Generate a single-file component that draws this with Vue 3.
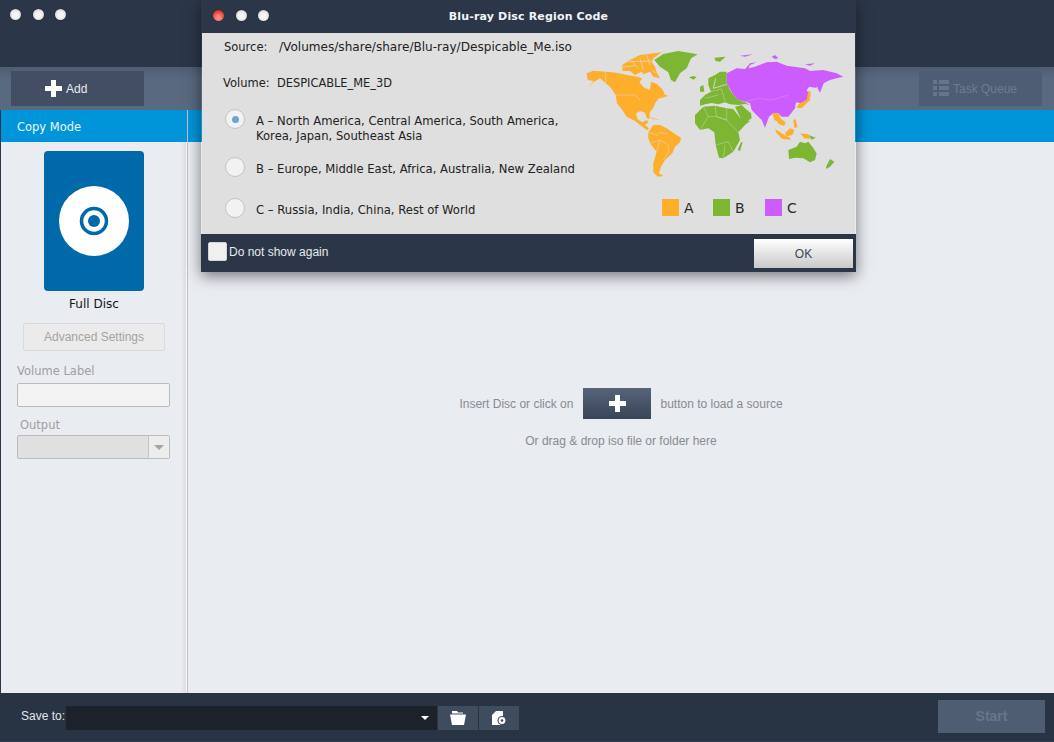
<template>
  <div class="window">
    <header class="titlebar">
      <div class="lights">
        <span class="light"></span>
        <span class="light"></span>
        <span class="light"></span>
      </div>
    </header>

    <div class="toolbar">
      <button class="tool-btn add-btn">
        <svg width="17" height="17" viewBox="0 0 17 17"><path d="M6 0h5v6h6v5h-6v6H6v-6H0V6h6z" fill="#fff" /></svg>
        <span>Add</span>
      </button>
      <button class="tool-btn queue-btn">
        <svg width="16" height="17" viewBox="0 0 16 17" fill="#66758a">
          <rect x="0" y="0" width="4" height="4" /><rect x="6" y="0" width="10" height="4" />
          <rect x="0" y="6" width="4" height="4" /><rect x="6" y="6" width="10" height="4" />
          <rect x="0" y="12" width="4" height="4" /><rect x="6" y="12" width="10" height="4" />
        </svg>
        <span>Task Queue</span>
      </button>
    </div>

    <div class="content">
      <aside class="sidebar">
        <div class="mode-title">Copy Mode</div>
        <div class="side-body">
          <div class="disc-card">
            <svg width="70" height="70" viewBox="0 0 70 70">
              <circle cx="35" cy="35" r="35" fill="#fff" />
              <circle cx="35" cy="35" r="12.5" fill="none" stroke="#0069aa" stroke-width="3.5" />
              <circle cx="35" cy="35" r="6" fill="#0069aa" />
            </svg>
          </div>
          <div class="disc-name">Full Disc</div>
          <button class="advanced">Advanced Settings</button>
          <label class="field-label">Volume Label</label>
          <div class="text-input"></div>
          <label class="field-label output-label">Output</label>
          <div class="select-box">
            <span class="select-arrow"></span>
          </div>
        </div>
      </aside>

      <main class="main">
        <div class="mode-strip"></div>
        <div class="drop-area">
          <div class="hint-row">
            <span>Insert Disc or click on</span>
            <div class="hint-btn">
              <svg width="17" height="17" viewBox="0 0 17 17"><path d="M6 0h5v6h6v5h-6v6H6v-6H0V6h6z" fill="#fff" /></svg>
            </div>
            <span>button to load a source</span>
          </div>
          <div class="hint-second">Or drag &amp; drop iso file or folder here</div>
        </div>
      </main>
    </div>

    <footer class="bottom">
      <span class="save-label">Save to:</span>
      <div class="save-input"><span class="save-arrow"></span></div>
      <button class="icon-btn">
        <svg width="16" height="14" viewBox="0 0 16 14" fill="#fff">
          <path d="M2 0h5l1 1.500h5v1H2z" />
          <path d="M0 3.500h16l-2 10.500H2z" />
        </svg>
      </button>
      <button class="icon-btn">
        <svg width="15" height="14" viewBox="0 0 15 14">
          <path d="M4 0h7v14H0V4z" fill="#fff" />
          <circle cx="10" cy="9.500" r="4.500" fill="#3f4c5e" />
          <circle cx="10" cy="9.500" r="3.400" fill="#fff" />
          <circle cx="10" cy="9.500" r="1.300" fill="#3f4c5e" />
        </svg>
      </button>
      <button class="start-btn">Start</button>
    </footer>

    <section class="dialog">
      <div class="dialog-title">
        <div class="lights dialog-lights">
          <span class="light red"></span>
          <span class="light"></span>
          <span class="light"></span>
        </div>
        <span class="dialog-heading">Blu-ray Disc Region Code</span>
      </div>

      <div class="dialog-body">
        <div class="dialog-left">
          <div class="info-row source-row"><span class="info-key">Source:</span>/Volumes/share/share/Blu-ray/Despicable_Me.iso</div>
          <div class="info-row volume-row"><span class="info-key short">Volume:</span>DESPICABLE_ME_3D</div>
          <div
            v-for="region in regions"
            :key="region.code"
            class="region"
            :class="'region-' + region.code"
          >
            <span class="radio" :class="{ checked: region.code === 'a' }"></span>
            <span class="region-text">{{ region.text }}</span>
          </div>
        </div>

        <div class="dialog-right">
          <svg class="world" width="270" height="140" viewBox="0 0 810 420">
            <g fill="#fdae2a">
              <path d="M5,85 L25,77 L62,80 L95,83 L125,90 L150,94 L172,100 L163,112 L178,128 L195,135 L198,110 L215,116 L232,133 L240,150 L250,152 L232,158 L222,160 L212,172 L205,188 L195,200 L193,222 L186,220 L180,203 L165,198 L153,205 L157,222 L172,232 L185,225 L190,232 L180,240 L192,250 L186,256 L172,245 L150,228 L125,215 L108,190 L96,175 L92,150 L75,125 L62,115 L45,100 L25,112 L10,128 L25,108 L8,105 Z" />
              <path d="M112,60 L135,45 L165,30 L230,22 L205,40 L200,52 L210,65 L215,82 L225,100 L205,95 L195,80 L175,88 L170,80 L150,90 L135,78 L112,78 Z" />
              <path d="M190,262 L205,240 L225,240 L245,250 L262,262 L288,278 L285,292 L270,305 L262,325 L240,345 L228,365 L222,385 L235,393 L218,395 L205,382 L205,355 L215,320 L195,295 L190,280 Z" />
              <path d="M190,215 L215,222 L225,225 L205,222 Z" />
            </g>
            <g fill="none" stroke="#dfdfdf">
              <path stroke-width="1.500" d="M62,80 L62,115" />
              <path stroke-width="1.500" d="M92,150 L150,150 L165,165" />
              <path stroke-width="2" d="M112,66 L150,62 M140,45 L160,72 M165,40 L175,75 M185,30 L195,60 M130,50 L200,48 M200,75 L215,85" />
              <path stroke-width="1.500" d="M190,262 L215,270 L225,262 L250,268 M195,295 L225,285 L250,300 L250,322 L235,345 M225,285 L215,320" />
            </g>
            <g fill="#7cb632">
              <path d="M208,45 L235,27 L280,18 L338,28 L318,40 L305,70 L285,85 L270,112 L258,105 L250,82 L225,65 Z" />
              <path d="M312,97 L325,93 L335,97 L325,104 Z" />
            </g>
            <g transform="translate(330 0)">
              <g fill="#cd5cff">
                <path d="M95,85 L125,70 L150,72 L180,65 L215,52 L245,50 L275,62 L330,70 L345,78 L385,75 L425,85 L445,95 L425,100 L405,105 L385,115 L375,125 L360,128 L343,125 L335,135 L345,150 L335,165 L318,175 L303,172 L300,190 L280,215 L260,215 L250,205 L235,205 L222,215 L210,248 L200,225 L190,215 L170,195 L165,175 L150,170 L130,165 L115,150 L95,115 Z" />
                <path d="M370,115 L388,110 L375,143 L368,130 Z" />
                <path d="M148,75 L165,55 L185,52 L165,60 L158,75 Z" />
                <path d="M230,35 L240,30 L250,40 L240,42 Z" />
                <path d="M135,32 L175,28 L150,35 Z" />
                <path d="M330,58 L360,55 L345,62 Z" />
              </g>
              <g fill="#7cb632">
                <path d="M40,100 L60,90 L75,80 L95,80 L95,115 L105,135 L115,150 L130,165 L150,172 L165,180 L150,177 L130,180 L105,178 L90,172 L70,178 L50,174 L30,178 L15,182 L15,165 L30,150 L48,140 L40,120 Z" />
                <path d="M15,125 L25,120 L28,140 L15,140 Z" />
                <path d="M0,210 L25,185 L60,182 L95,190 L115,192 L135,218 L165,228 L150,240 L130,262 L135,285 L115,320 L85,340 L72,338 L62,300 L58,262 L40,250 L15,255 L0,235 Z" />
                <path d="M120,185 L140,180 L150,190 L168,205 L170,220 L145,235 L132,210 Z" />
                <path d="M138,292 L143,292 L135,318 L128,315 Z" />
                <path d="M58,38 L92,35 L75,50 L62,48 Z" />
                <path d="M280,315 L305,305 L315,290 L330,295 L340,290 L352,305 L365,325 L360,345 L345,352 L325,340 L300,338 L282,342 Z" />
                <path d="M405,342 L418,350 L405,365 L395,372 L393,365 Z" />
                <path d="M340,270 L362,278 L350,284 Z" />
              </g>
              <g fill="#fdae2a">
                <path d="M232,205 L250,205 L258,222 L272,232 L268,242 L252,238 L245,228 L238,225 Z" />
                <path d="M340,138 L347,140 L345,165 L320,190 L305,188 L310,178 L335,165 Z" />
                <path d="M240,252 L265,268 L285,278 L288,284 L262,282 L245,265 Z" />
                <path d="M270,265 L285,250 L298,255 L292,270 L275,274 Z" />
                <path d="M295,225 L301,222 L308,245 L298,250 Z" />
                <path d="M315,265 L340,268 L345,282 L328,280 Z" />
              </g>
              <g fill="none" stroke="#dfdfdf" stroke-width="1.200">
                <path d="M25,185 L40,215 L15,255 M60,182 L65,215 L95,225 L130,262 M95,190 L95,225 L65,215 L40,215 M62,300 L100,290 L115,320 M85,340 L90,300" />
                <path stroke-width="2.500" d="M62,100 L55,130 L95,118" />
                <path d="M48,140 L80,132 L90,170 M30,160 L70,150" />
                <path d="M150,170 L190,160 L230,165 L280,150" stroke="#e2a0ff" />
              </g>
            </g>
          </svg>
          <div class="legend">
            <div v-for="item in legend" :key="item.name" class="legend-item" :class="'legend-' + item.name">
              <span class="swatch" :class="'swatch-' + item.name"></span>
              <span class="legend-name">{{ item.name }}</span>
            </div>
          </div>
        </div>
      </div>

      <div class="dialog-foot">
        <span class="checkbox"></span>
        <span class="no-show">Do not show again</span>
        <button class="ok-btn">OK</button>
      </div>
    </section>
  </div>
</template>

<script setup>
const regions = [
  { code: 'a', text: 'A – North America, Central America, South America, Korea, Japan, Southeast Asia' },
  { code: 'b', text: 'B – Europe, Middle East, Africa, Australia, New Zealand' },
  { code: 'c', text: 'C – Russia, India, China, Rest of World' }
]

const legend = [{ name: 'A' }, { name: 'B' }, { name: 'C' }]
</script>

<style>
html, body {
  margin: 0;
  background: #2b3648;
}
</style>

<style scoped>
.window {
  position: relative;
  width: 1054px;
  height: 742px;
  display: flex;
  flex-direction: column;
  overflow: hidden;
  background: #2b3648;
  font-family: "Liberation Sans", Arial, sans-serif;
  font-size: 12px;
}

button {
  border: none;
  padding: 0;
  font-family: inherit;
  font-size: 12px;
}

.titlebar {
  height: 67px;
  flex: none;
  background: #2b3648;
  box-sizing: border-box;
  padding: 9px 0 0 10px;
}

.lights {
  display: flex;
  gap: 11.5px;
}

.light {
  width: 11px;
  height: 11px;
  border-radius: 50%;
  background: radial-gradient(circle at 50% 55%, #f4f4f4 35%, #d0d0d0 80%);
  box-shadow: 0 0 1px rgba(0, 0, 0, 0.8);
}

.light.red {
  background: radial-gradient(circle at 50% 70%, #ff8a86 15%, #e0302c 75%);
}

.toolbar {
  height: 43px;
  flex: none;
  box-sizing: border-box;
  padding: 4px 12px 4px 11px;
  display: flex;
  justify-content: space-between;
  background: linear-gradient(#4f5d73, #596980 30%);
}

.tool-btn {
  height: 35px;
  display: flex;
  align-items: center;
  box-sizing: border-box;
}

.add-btn {
  width: 133px;
  gap: 4px;
  padding-left: 34px;
  background: #414e63;
  color: #e8ebef;
}

.queue-btn {
  width: 123px;
  gap: 4px;
  padding-left: 14px;
  background: #4e5d73;
  color: #6d7c91;
}

.content {
  flex: 1;
  display: flex;
  min-height: 0;
  margin-left: 1px;
}

.sidebar {
  width: 186px;
  flex: none;
  display: flex;
  flex-direction: column;
  background: linear-gradient(to right, #e9ecf1 calc(100% - 6px), #dcdee2 calc(100% - 1px), #f6f7f9 calc(100% - 1px));
}

.mode-title {
  height: 32px;
  line-height: 34px;
  flex: none;
  padding-left: 16px;
  background: #0095d9;
  color: #eef7fc;
  font-family: "DejaVu Sans", sans-serif;
  font-size: 11.5px;
}

.side-body {
  padding: 9px 16px 0;
  display: flex;
  flex-direction: column;
}

.disc-card {
  width: 100px;
  height: 140px;
  margin-left: 27px;
  border-radius: 4px;
  background: #0069aa;
  display: flex;
  align-items: center;
  justify-content: center;
}

.disc-name {
  margin-top: 6px;
  line-height: 15px;
  text-align: center;
  width: 154px;
  color: #151515;
  font-family: "DejaVu Sans", sans-serif;
  font-size: 12px;
}

.advanced {
  width: 142px;
  height: 28px;
  margin: 11px 0 0 6px;
  box-sizing: border-box;
  border: 1px solid #d9dade;
  border-radius: 2px;
  background: #ebebeb;
  color: #a3a3a3;
}

.field-label {
  margin-top: 13px;
  line-height: 15px;
  color: #a0a0a0;
  font-family: "DejaVu Sans", sans-serif;
  font-size: 11.5px;
}

.text-input {
  width: 153px;
  height: 24px;
  margin-top: 4px;
  box-sizing: border-box;
  border: 1px solid #bcbcbc;
  border-radius: 2px;
  background: #f3f3f3;
}

.output-label {
  margin: 11px 0 2px 3px;
}

.select-box {
  width: 153px;
  height: 24px;
  box-sizing: border-box;
  border: 1px solid #bcbcbc;
  border-radius: 2px;
  background: #e0e0e0;
  display: flex;
  justify-content: flex-end;
}

.select-arrow {
  width: 20px;
  border-left: 1px solid #c4c4c4;
  background: #ededed;
  position: relative;
}

.select-arrow::after {
  content: "";
  position: absolute;
  left: 5px;
  top: 9px;
  border-left: 5px solid transparent;
  border-right: 5px solid transparent;
  border-top: 5px solid #a5a5a5;
}

.main {
  flex: 1;
  display: flex;
  flex-direction: column;
  border-left: 1px solid #bfc1c4;
  background: #e9ecf1;
}

.mode-strip {
  height: 32px;
  flex: none;
  background: #0095d9;
}

.drop-area {
  flex: 1;
  display: flex;
  flex-direction: column;
  align-items: center;
  justify-content: center;
  padding-top: 2px;
  color: #888b90;
}

.hint-row {
  display: flex;
  align-items: center;
  gap: 9px;
}

.hint-btn {
  width: 68px;
  height: 31px;
  margin-left: 1px;
  display: flex;
  align-items: center;
  justify-content: center;
  background: linear-gradient(#566379, #394658);
}

.hint-second {
  margin-top: 15px;
  line-height: 15px;
}

.bottom {
  height: 49px;
  flex: none;
  display: flex;
  align-items: flex-start;
  padding-top: 13px;
  box-sizing: border-box;
  background: #283444;
  border-bottom: 1px solid #2d4059;
}

.save-label {
  margin-left: 21px;
  width: 45px;
  line-height: 20px;
  color: #e3e6ea;
}

.save-input {
  width: 371px;
  height: 24px;
  margin-right: 1px;
  position: relative;
  background: #1d2129;
}

.save-arrow {
  position: absolute;
  right: 8px;
  top: 10px;
  border-left: 4px solid transparent;
  border-right: 4px solid transparent;
  border-top: 4px solid #fff;
}

.icon-btn {
  width: 40px;
  height: 24px;
  margin-right: 1px;
  display: flex;
  align-items: center;
  justify-content: center;
  background: #3f4c5e;
}

.start-btn {
  width: 107px;
  height: 33px;
  margin: -6px 9px 0 auto;
  padding-bottom: 2px;
  background: #4e5d72;
  color: #67768a;
  font-size: 14px;
  font-weight: bold;
}

.dialog {
  position: absolute;
  left: 201px;
  top: 0;
  width: 655px;
  height: 272px;
  display: flex;
  flex-direction: column;
  box-shadow: 0 4px 14px rgba(0, 0, 0, 0.5);
  font-family: "DejaVu Sans", sans-serif;
  color: #222;
}

.dialog-title {
  height: 33px;
  flex: none;
  position: relative;
  box-sizing: border-box;
  padding: 10px 0 0 12px;
  background: #2b3648;
}

.dialog-heading {
  position: absolute;
  left: 0;
  right: 0;
  top: 9px;
  text-align: center;
  line-height: 15px;
  color: #f2f4f6;
  font-size: 11px;
  font-weight: bold;
  letter-spacing: 0.16px;
}

.dialog-body {
  flex: 1;
  display: flex;
  background: #dfdfdf;
  margin: 0 1px;
}

.dialog-left {
  width: 383px;
  flex: none;
  padding-top: 6px;
}

.info-row {
  line-height: 16px;
  font-size: 11.4px;
  white-space: nowrap;
}

.source-row {
  padding-left: 22px;
  font-size: 12.08px;
}

.volume-row {
  padding-left: 21px;
  margin-top: 20px;
}

.info-key {
  display: inline-block;
  width: 55px;
  font-size: 11.5px;
}

.info-key.short {
  width: 54px;
}

.region {
  display: flex;
  align-items: flex-start;
  padding-left: 23px;
  font-size: 11.6px;
  line-height: 15px;
}

.region-a {
  margin-top: 23px;
}

.region-b {
  margin-top: 18px;
}

.region-c {
  margin-top: 26px;
}

.radio {
  width: 18px;
  height: 18px;
  flex: none;
  margin-top: -5px;
  margin-right: 11px;
  border: 1px solid #c2c2c2;
  border-radius: 50%;
  background: #f2f2f2;
  display: flex;
  align-items: center;
  justify-content: center;
}

.radio.checked::after {
  content: "";
  width: 7px;
  height: 7px;
  border-radius: 50%;
  background: #6da4d6;
}

.region-text {
  width: 325px;
}

.dialog-right {
  flex: 1;
  padding-top: 12px;
  display: flex;
  flex-direction: column;
}

.world {
  display: block;
}

.legend {
  display: flex;
  margin-top: 14px;
  padding-left: 77px;
  font-size: 14px;
  color: #2a2a2a;
}

.legend-item {
  display: flex;
  align-items: center;
  gap: 5px;
  width: 51px;
}

.legend-B {
  width: 52px;
}

.legend-C {
  width: auto;
}

.swatch {
  width: 17px;
  height: 17px;
}

.swatch-A {
  background: #fdae2a;
}

.swatch-B {
  background: #7cb632;
}

.swatch-C {
  background: #cd5cff;
}

.dialog-foot {
  height: 38px;
  flex: none;
  display: flex;
  align-items: flex-start;
  box-sizing: border-box;
  padding: 0 3px 0 7px;
  background: #2b3648;
  font-family: "Liberation Sans", Arial, sans-serif;
}

.checkbox {
  width: 17px;
  height: 17px;
  margin-top: 8px;
  border: 1px solid #d5d5d5;
  border-radius: 2px;
  background: #f0f0f0;
}

.no-show {
  margin: 11px 0 0 2px;
  line-height: 14px;
  color: #e8eaee;
}

.ok-btn {
  width: 99px;
  height: 29px;
  margin: 5px 0 0 auto;
  background: linear-gradient(#fff, #c9c9c9);
  color: #3b4656;
}
</style>
